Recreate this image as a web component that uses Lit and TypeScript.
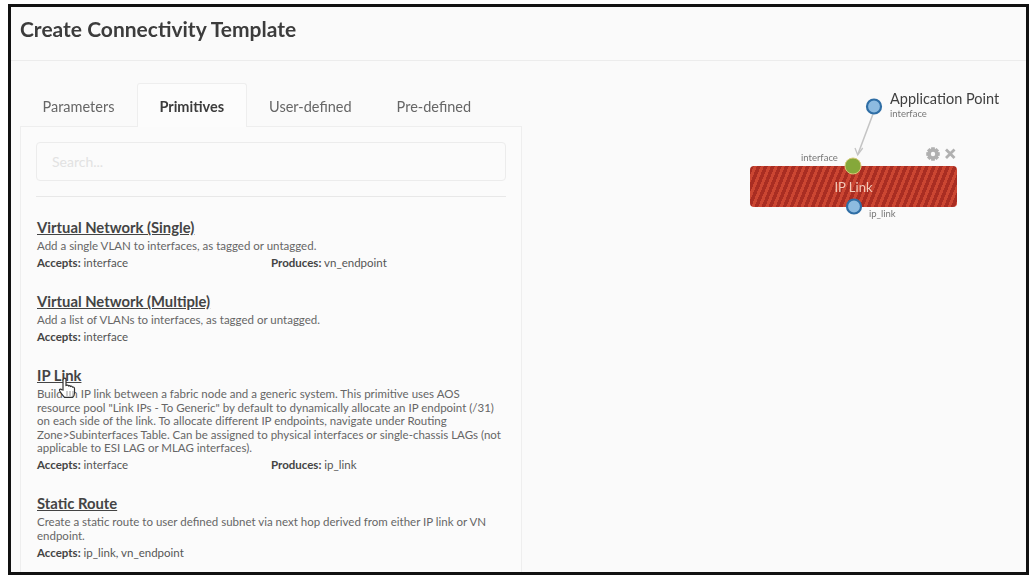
import { LitElement, html, css, svg } from 'lit';
import { customElement } from 'lit/decorators.js';

interface Primitive {
  title: string;
  lines: string[];
  accepts: string;
  produces?: string;
}

const PRIMITIVES: Primitive[] = [
  {
    title: 'Virtual Network (Single)',
    lines: ['Add a single VLAN to interfaces, as tagged or untagged.'],
    accepts: 'interface',
    produces: 'vn_endpoint',
  },
  {
    title: 'Virtual Network (Multiple)',
    lines: ['Add a list of VLANs to interfaces, as tagged or untagged.'],
    accepts: 'interface',
  },
  {
    title: 'IP Link',
    lines: [
      'Build an IP link between a fabric node and a generic system. This primitive uses AOS',
      'resource pool "Link IPs - To Generic" by default to dynamically allocate an IP endpoint (/31)',
      'on each side of the link. To allocate different IP endpoints, navigate under Routing',
      'Zone>Subinterfaces Table. Can be assigned to physical interfaces or single-chassis LAGs (not',
      'applicable to ESI LAG or MLAG interfaces).',
    ],
    accepts: 'interface',
    produces: 'ip_link',
  },
  {
    title: 'Static Route',
    lines: [
      'Create a static route to user defined subnet via next hop derived from either IP link or VN',
      'endpoint.',
    ],
    accepts: 'ip_link, vn_endpoint',
  },
];

const TABS = ['Parameters', 'Primitives', 'User-defined', 'Pre-defined'];

// 8 teeth, outer radius r1, root radius r2
function gearPath(cx: number, cy: number, r1: number, r2: number) {
  const pts: string[] = [];
  for (let i = 0; i < 8; i++) {
    const a = (i * Math.PI) / 4;
    const w = 0.26;
    const corners: [number, number][] = [
      [r2, a - w * 1.5],
      [r1, a - w],
      [r1, a + w],
      [r2, a + w * 1.5],
    ];
    for (const [r, t] of corners) {
      pts.push(`${(cx + r * Math.cos(t)).toFixed(2)} ${(cy + r * Math.sin(t)).toFixed(2)}`);
    }
  }
  return `M${pts.join('L')}Z`;
}

@customElement('app-root')
export class AppRoot extends LitElement {
  static styles = css`
    :host {
      display: block;
      height: 579px;
      background: #fff;
      font-family: Lato, 'Liberation Sans', sans-serif;
      color: #4a4a4a;
      overflow: hidden;
    }
    .frame {
      box-sizing: border-box;
      height: 571px;
      margin: 4px 6px 0 8px;
      border: 3px solid #111;
      background: #fafafa;
      display: flex;
      flex-direction: column;
      overflow: hidden;
    }
    .head {
      height: 54px;
      flex: none;
      box-sizing: border-box;
      padding: 8px 0 0 9px;
      border-bottom: 1px solid #ececec;
      font-size: 21px;
      font-weight: 700;
      line-height: 28px;
      color: #3c3c3c;
      filter: blur(0.5px);
    }
    .body {
      flex: 1;
      display: flex;
      min-height: 0;
      filter: blur(0.5px);
    }
    .left {
      width: 502px;
      flex: none;
      margin-left: 9px;
      padding-top: 22px;
    }
    .tabs {
      display: flex;
      height: 44px;
      box-sizing: border-box;
      position: relative;
      z-index: 1;
    }
    .tab {
      box-sizing: border-box;
      height: 44px;
      padding: 14px 21.5px 0;
      font-size: 14.5px;
      line-height: 18px;
      color: #666;
      border: 1px solid transparent;
      border-bottom: none;
    }
    .tab.on {
      font-weight: 700;
      color: #3c3c3c;
      background: #fcfcfc;
      border-color: #eeeeee;
      border-radius: 3px 3px 0 0;
    }
    .panel {
      height: 460px;
      box-sizing: border-box;
      border: 1px solid #eeeeee;
      border-bottom: none;
      margin-top: -1px;
      background: #fbfbfb;
      padding: 15px 15px 0;
    }
    .search {
      height: 39px;
      box-sizing: border-box;
      border: 1px solid #ececec;
      border-radius: 4px;
      background: #fbfbfb;
      padding: 10px 15px;
      font-size: 14px;
      line-height: 18px;
      color: #e2e2e2;
    }
    .rule {
      height: 1px;
      background: #e8e8e8;
      margin-top: 15px;
      margin-bottom: 21px;
    }
    .prim {
      margin-bottom: 22px;
      padding-left: 1px;
      font-size: 11.5px;
      line-height: 13.5px;
      color: #666;
    }
    .prim h3 {
      margin: 0 0 3px;
      font-size: 14.8px;
      line-height: 18px;
      font-weight: 700;
      color: #444;
      text-decoration: underline;
    }
    .prim .line {
      white-space: nowrap;
    }
    .meta {
      display: flex;
      margin-top: 3.5px;
      line-height: 14px;
      color: #555;
    }
    .meta > span {
      width: 234px;
    }
    .meta b {
      color: #444;
    }
    .title-wrap {
      position: relative;
    }
    .cursor {
      position: absolute;
      left: 21px;
      top: 11px;
    }
    .canvas {
      flex: 1;
      position: relative;
    }
    .canvas > * {
      position: absolute;
    }
    .canvas svg {
      left: 0;
      top: 0;
    }
    .ap {
      left: 368px;
      top: 30px;
      font-size: 14.5px;
      line-height: 16px;
      color: #3f3f3f;
    }
    .sub {
      margin-top: 1px;
      font-size: 9.5px;
      line-height: 12px;
      color: #777;
    }
    .label-in {
      left: 279px;
      top: 90px;
    }
    .label-out {
      left: 347px;
      top: 146px;
    }
    .node {
      left: 228px;
      top: 105px;
      width: 207px;
      height: 41px;
      box-sizing: border-box;
      border-radius: 4px;
      background: repeating-linear-gradient(
        112deg,
        #a92d22 0 3.500px,
        #cb4632 3.500px 6.500px
      );
      color: #f2c9b8;
      font-size: 13px;
      line-height: 43px;
      text-align: center;
    }
  `;

  private cursorIcon() {
    return html`<svg class="cursor" width="20" height="22" viewBox="0 0 20 22">
      <path
        d="M6 1.5c1-.7 2 0 2 1v6l1-.3c.8-.1 1.3.2 1.5.7.8-.4 1.6-.2 2 .5.8-.4 1.7-.1 2 .7.8-.3 2 .2 2 1.3v4.5c0 2-1 3.5-2 4.5H6.5c-1-1.300-2.500-3-3.700-4.800-.8-1-1.800-2.200-1.300-3 .5-.7 1.500-.5 2.300.2L5 13V3c0-.6.4-1.200 1-1.500z"
        fill="#fff"
        stroke="#333"
        stroke-width="1.200"
      />
      <path d="M9 14v5M12 14v5M15 14v5" stroke="#999" stroke-width="1" />
    </svg>`;
  }

  private renderPrimitive(p: Primitive) {
    const title =
      p.title === 'IP Link'
        ? html`<h3><span class="title-wrap">${p.title}${this.cursorIcon()}</span></h3>`
        : html`<h3>${p.title}</h3>`;
    return html`<div class="prim">
      ${title}
      ${p.lines.map((l) => html`<div class="line">${l}</div>`)}
      <div class="meta">
        <span><b>Accepts:</b> ${p.accepts}</span>
        ${p.produces ? html`<span><b>Produces:</b> ${p.produces}</span>` : ''}
      </div>
    </div>`;
  }

  private diagram() {
    return svg`
      <line x1="351" y1="53" x2="336" y2="93" stroke="#c4c4c4" stroke-width="1.500" />
      <path d="M333 87l2.700 7 5-7" fill="none" stroke="#c4c4c4" stroke-width="1.300" />
      <circle cx="352" cy="45.500" r="7" fill="#8dbbe0" stroke="#2f6ea5" stroke-width="2.200" />
    `;
  }

  private ports() {
    return svg`
      <circle cx="331" cy="105" r="8" fill="#85a83a" stroke="#d5c877" stroke-width="1" />
      <circle cx="332" cy="145.500" r="7" fill="#8dbbe0" stroke="#2f6ea5" stroke-width="2.200" />
      <path d=${gearPath(411, 93, 7, 5.2)} fill="#b0b0b0" />
      <circle cx="411" cy="93" r="2.200" fill="#fafafa" />
      <path d="M424 88.500l8.500 8.500M432.500 88.500l-8.500 8.500" stroke="#b0b0b0" stroke-width="2.800" />
    `;
  }

  render() {
    return html`<div class="frame">
      <div class="head">Create Connectivity Template</div>
      <div class="body">
        <div class="left">
          <div class="tabs">
            ${TABS.map(
              (t) => html`<div class="tab ${t === 'Primitives' ? 'on' : ''}">${t}</div>`
            )}
          </div>
          <div class="panel">
            <div class="search">Search...</div>
            <div class="rule"></div>
            ${PRIMITIVES.map((p) => this.renderPrimitive(p))}
          </div>
        </div>
        <div class="canvas">
          <svg width="505" height="200">${this.diagram()}</svg>
          <div class="ap">Application Point<div class="sub">interface</div></div>
          <div class="sub label-in">interface</div>
          <div class="node">IP Link</div>
          <div class="sub label-out">ip_link</div>
          <svg width="505" height="200">${this.ports()}</svg>
        </div>
      </div>
    </div>`;
  }
}
